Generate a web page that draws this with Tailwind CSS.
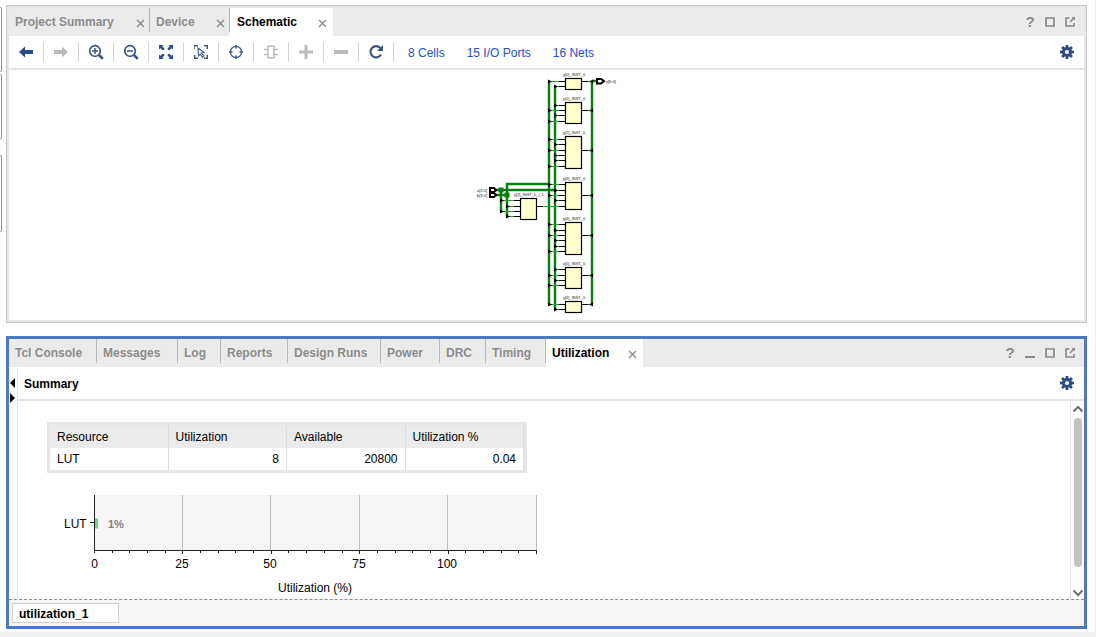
<!DOCTYPE html>
<html lang="en">
<head>
<meta charset="utf-8">
<title>Schematic and Utilization</title>
<script src="https://cdn.jsdelivr.net/npm/@tailwindcss/browser@4"></script>
</head>
<body class="flex min-h-screen flex-col bg-white font-['Liberation_Sans',Arial,sans-serif] text-xs text-black">

<svg class="hidden" aria-hidden="true">
  <symbol id="close" viewBox="0 0 9 9"><path d="M1 1l7 7M8 1L1 8" stroke="#8a8a8a" stroke-width="1.4" fill="none"/></symbol>
  <symbol id="box" viewBox="0 0 10 10"><path d="M1 1h8v8H1z" stroke="#8a8a8a" stroke-width="1.700" fill="none"/></symbol>
  <symbol id="popout" viewBox="0 0 10 10"><path d="M4.500 1H1v8h8V6M5 5l4-4" stroke="#8a8a8a" stroke-width="1.600" fill="none"/><path d="M6.500 0H10v3.500z" fill="#8a8a8a"/></symbol>
  <symbol id="gear" viewBox="-7 -7 14 14"><g fill="#2f4b80"><circle r="5.1"/><g id="teeth"><rect x="-1.4" y="-7" width="2.8" height="14"/><rect x="-7" y="-1.4" width="14" height="2.8"/></g><use href="#teeth" transform="rotate(45)"/></g><circle r="2.1" fill="#fff"/></symbol>
</svg>

<div class="flex grow">
  <aside class="flex w-[6px] shrink-0 flex-col items-start pt-[7px]" aria-hidden="true">
    <div class="h-[65px] w-[2px] rounded-r border border-l-0 border-[#8f8f8f]"></div>
    <div class="mt-[2px] h-[65px] w-[2px] rounded-r border border-l-0 border-[#8f8f8f]"></div>
    <div class="mt-4 h-[77px] w-[2px] rounded-r border border-l-0 border-[#8f8f8f]"></div>
  </aside>

  <main class="mr-[8px] flex min-w-0 grow flex-col gap-[13px] pt-[5px] pb-[3px]">
    <section class="border border-[#c6c6c6]" aria-label="Schematic">
     <div class="border-2 border-[#e8e8e8]">
      <div class="flex h-7 bg-[#ebebeb]">
        <div class="flex grow font-bold text-[#8c8c8c]">
          <div class="flex w-[140px] items-center justify-between pr-1 pl-[6px]"><button>Project Summary</button><button aria-label="Close Project Summary"><svg class="mt-[2px] size-[9px]"><use href="#close"/></svg></button></div>
          <div class="flex w-[80px] items-center justify-between pr-1"><span class="h-6 w-px self-start bg-[#b4b4b4]"></span><button class="mr-auto ml-[6px]">Device</button><button aria-label="Close Device"><svg class="mt-[2px] size-[9px]"><use href="#close"/></svg></button></div>
          <div class="flex w-[104px] items-center justify-between bg-white pr-[6px]"><span class="h-6 w-px self-start bg-[#b4b4b4]"></span><button class="mr-auto ml-[7px] text-black">Schematic</button><button aria-label="Close Schematic"><svg class="mt-[2px] size-[9px]"><use href="#close"/></svg></button></div>
        </div>
        <div class="flex pr-1 text-[#8a8a8a]">
          <button class="flex w-5 items-center justify-center text-[15px] font-bold" aria-label="Help">?</button>
          <button class="flex w-5 items-center justify-center" aria-label="Maximize"><svg class="size-[10px]"><use href="#box"/></svg></button>
          <button class="flex w-5 items-center justify-center" aria-label="Float"><svg class="size-[10px]"><use href="#popout"/></svg></button>
        </div>
      </div>

      <div class="flex h-[34px] items-center border-b-2 border-[#e5e5e5]">
        <button class="flex h-5 w-[35px] items-center justify-center border-r border-[#d4d4d4]" aria-label="Back"><svg class="h-[12px] w-[14px]" viewBox="0 0 14 12"><path d="M0 6l6-5.500v3.500h8v4H6v3.500z" fill="#2f4b87"/></svg></button>
        <button class="flex h-5 w-[35px] items-center justify-center border-r border-[#d4d4d4]" aria-label="Forward"><svg class="h-[12px] w-[14px]" viewBox="0 0 14 12"><path d="M14 6L8 .5V4H0v4h8v3.500z" fill="#b9b9b9"/></svg></button>
        <button class="flex h-5 w-[35px] items-center justify-center border-r border-[#d4d4d4]" aria-label="Zoom in"><svg class="size-4" viewBox="0 0 16 16" fill="none" stroke="#3a5283"><circle cx="7" cy="7" r="5.300" stroke-width="1.700"/><path d="M4 7h6M7 4v6" stroke-width="1.500"/><path d="M11 11l3.800 3.800" stroke-width="2.600"/></svg></button>
        <button class="flex h-5 w-[35px] items-center justify-center border-r border-[#d4d4d4]" aria-label="Zoom out"><svg class="size-4" viewBox="0 0 16 16" fill="none" stroke="#3a5283"><circle cx="7" cy="7" r="5.300" stroke-width="1.700"/><path d="M4 7h6" stroke-width="1.500"/><path d="M11 11l3.800 3.800" stroke-width="2.600"/></svg></button>
        <button class="flex h-5 w-[35px] items-center justify-center border-r border-[#d4d4d4]" aria-label="Zoom fit"><svg class="size-[14px]" viewBox="0 0 14 14"><path d="M0 0h4.500L3.300 1.300 5.800 3.900 4 5.600 1.400 3.200 0 4.500zM14 0v4.500l-1.400-1.300L10 5.600 8.200 3.900l2.500-2.600L9.500 0zM0 14V9.500l1.400 1.300L4 8.400l1.800 1.700-2.500 2.600L4.500 14zM14 14H9.500l1.200-1.300-2.500-2.600L10 8.400l2.600 2.400L14 9.500z" fill="#344e80"/></svg></button>
        <button class="flex h-5 w-[35px] items-center justify-center border-r border-[#d4d4d4]" aria-label="Select area"><svg class="size-[14px]" viewBox="0 0 14 14" fill="none" stroke="#3f5988"><path d="M0 4V.7h4M10 .7h3.300V4M13.300 10v3.300H10M4 13.300H.7V10" stroke-width="1.500"/><path d="M4 3l6 4.500-2.500.5 2.500 3-1.500 1.200L6.200 9.200 4.500 11z" stroke-width="1.100"/></svg></button>
        <button class="flex h-5 w-[35px] items-center justify-center border-r border-[#d4d4d4]" aria-label="Center"><svg class="size-[14px]" viewBox="0 0 14 14" fill="none" stroke="#3f5988"><circle cx="7" cy="7" r="5.600" stroke-width="1.300"/><path d="M7 0v3.500M7 10.500V14M0 7h3.500M10.500 7H14" stroke-width="1.500"/></svg></button>
        <button class="flex h-5 w-[35px] items-center justify-center border-r border-[#d4d4d4]" aria-label="Expand cell"><svg class="size-[14px]" viewBox="0 0 14 14" fill="none" stroke="#bcbcbc" stroke-width="1.500"><path d="M4 1.200h6v11.600H4zM0 4.500h4M0 9.500h4M10 4.500h4M10 9.500h4"/></svg></button>
        <button class="flex h-5 w-[35px] items-center justify-center border-r border-[#d4d4d4]" aria-label="Add"><svg class="size-[14px]" viewBox="0 0 14 14"><path d="M5.500 0h3v5.500H14v3H8.500V14h-3V8.500H0v-3h5.500z" fill="#bcbcbc"/></svg></button>
        <button class="flex h-5 w-[35px] items-center justify-center border-r border-[#d4d4d4]" aria-label="Remove"><svg class="size-[14px]" viewBox="0 0 14 14"><path d="M0 5h14v4H0z" fill="#bcbcbc"/></svg></button>
        <button class="flex h-5 w-[35px] items-center justify-center border-r border-[#d4d4d4]" aria-label="Refresh"><svg class="size-[14px]" viewBox="0 0 14 14"><path d="M11.300 3A5.600 5.600 0 1 0 12 9.500" fill="none" stroke="#3e5378" stroke-width="2.100"/><path d="M14 0v6H8z" fill="#3e5378"/></svg></button>
        <div class="ml-[14px] flex grow gap-[22px] pt-px text-[#2450c8]">
          <a href="#cells">8 Cells</a><a href="#ports">15 I/O Ports</a><a href="#nets">16 Nets</a>
        </div>
        <button class="mr-[10px]" aria-label="Schematic settings"><svg class="size-[14px]"><use href="#gear"/></svg></button>
      </div>

      <div class="flex justify-center">
        <svg id="schematic" class="h-[250px] w-[151px]" viewBox="471 70 151 250" role="img" aria-label="Netlist schematic">
          <g fill="none" stroke="#0b7d14" stroke-width="2.400">
            <path d="M549 81V304M555 86V309M592 81V304M592 81H597"/>
            <path d="M496 190H555M496 195H507M501 190V211M507 216V184H549"/>
          </g>
          <path d="M498.500 187.500h5v5h-5zM504.500 192.500h5v5h-5z" fill="#0b7d14"/>
          <g id="wires"></g>
          <g id="cells" fill="#ffffd0" stroke="#000" stroke-width="1.200"></g>
          <g fill="#fff" stroke="#000" stroke-width="2">
            <path d="M490 188h4l2 2-2 2h-4zM490 193h4l2 2-2 2h-4zM597 79h4l3 2-3 2.500h-4z"/>
          </g>
          <g id="names" fill="#222" font-size="4">
            <text x="477" y="192">a[3:0]</text><text x="477" y="197">b[3:0]</text><text x="606" y="83">y[6:0]</text>
            <text x="514" y="196">y[3]_INST_0_i_1</text>
          </g>
        </svg>
      </div>
     </div>
    </section>

    <section class="flex grow flex-col border-3 border-[#4d7abf]" aria-label="Utilization">
      <div class="flex h-7 bg-[#ebebeb]">
        <div class="flex grow font-bold text-[#8c8c8c]">
          <button class="mb-1 w-[88px] border-r border-[#b8b8b8] pt-1 pl-[6px] text-left">Tcl Console</button>
          <button class="mb-1 w-[81px] border-r border-[#b8b8b8] pt-1 pl-[6px] text-left">Messages</button>
          <button class="mb-1 w-[43px] border-r border-[#b8b8b8] pt-1 pl-[6px] text-left">Log</button>
          <button class="mb-1 w-[67px] border-r border-[#b8b8b8] pt-1 pl-[6px] text-left">Reports</button>
          <button class="mb-1 w-[93px] border-r border-[#b8b8b8] pt-1 pl-[6px] text-left">Design Runs</button>
          <button class="mb-1 w-[59px] border-r border-[#b8b8b8] pt-1 pl-[6px] text-left">Power</button>
          <button class="mb-1 w-[46px] border-r border-[#b8b8b8] pt-1 pl-[6px] text-left">DRC</button>
          <button class="mb-1 w-[60px] border-r border-[#b8b8b8] pt-1 pl-[6px] text-left">Timing</button>
          <div class="flex w-[97px] items-center justify-between bg-white pr-[6px] pl-[6px]"><button class="text-black">Utilization</button><button aria-label="Close Utilization"><svg class="mt-[2px] size-[9px]"><use href="#close"/></svg></button></div>
        </div>
        <div class="flex pr-1 text-[#8a8a8a]">
          <button class="flex w-5 items-center justify-center text-[15px] font-bold" aria-label="Help">?</button>
          <button class="flex w-5 items-center justify-center" aria-label="Minimize"><svg class="size-[10px]" viewBox="0 0 10 10"><path d="M0 8h10v2H0z" fill="#8a8a8a"/></svg></button>
          <button class="flex w-5 items-center justify-center" aria-label="Maximize"><svg class="size-[10px]"><use href="#box"/></svg></button>
          <button class="flex w-5 items-center justify-center" aria-label="Float"><svg class="size-[10px]"><use href="#popout"/></svg></button>
        </div>
      </div>

      <div class="flex grow">
        <div class="flex w-[9px] flex-col gap-[5px] border-r border-[#e2e2e2] pt-[11px] pl-px">
          <button aria-label="Collapse left"><svg class="h-[10px] w-[5px]" viewBox="0 0 5 10"><path d="M5 0v10L0 5z"/></svg></button>
          <button aria-label="Expand right"><svg class="h-[10px] w-[5px]" viewBox="0 0 5 10"><path d="M0 0v10l5-5z"/></svg></button>
        </div>
        <div class="flex min-w-0 grow flex-col">
          <div class="flex h-[34px] items-center justify-between border-b-2 border-[#e5e5e5] pr-[10px] pl-[6px]">
            <h2 class="pt-px font-bold">Summary</h2>
            <button aria-label="Utilization settings"><svg class="size-[14px]"><use href="#gear"/></svg></button>
          </div>
          <div class="flex grow">
            <div class="grow pt-[21px] pl-[29px]">
              <table class="w-[480px] table-fixed border-separate border-spacing-0 border-3 border-[#e6e6e6]">
                <thead>
                  <tr class="h-[23px] bg-[#ebebeb] text-left">
                    <th class="border-r border-[#dcdcdc] px-[7px] font-normal">Resource</th>
                    <th class="border-r border-[#dcdcdc] px-[7px] font-normal">Utilization</th>
                    <th class="border-r border-[#dcdcdc] px-[7px] font-normal">Available</th>
                    <th class="border-r border-[#dcdcdc] px-[7px] font-normal">Utilization %</th>
                  </tr>
                </thead>
                <tbody>
                  <tr class="h-[22px] text-right">
                    <td class="border-r border-[#dcdcdc] px-[7px] text-left">LUT</td>
                    <td class="border-r border-[#dcdcdc] px-[7px]">8</td>
                    <td class="border-r border-[#dcdcdc] px-[7px]">20800</td>
                    <td class="border-r border-[#dcdcdc] px-[7px]">0.04</td>
                  </tr>
                </tbody>
              </table>
              <svg class="mt-[17px] h-[108px] w-[500px]" viewBox="47 490 500 108" role="img" aria-label="Utilization chart">
                <path d="M94 495H537V550H94z" fill="#f5f5f5"/>
                <path d="M182.500 495V550M270.500 495V550M359.500 495V550M447.500 495V550M536.500 495V550" stroke="#bdbdbd"/>
                <path d="M95 518.500h3v10h-3z" fill="#6fd67a"/>
                <path id="axis" d="M94.500 495V553M90 522.500h4M94 550.500H537" fill="none" stroke="#222"/>
                <g id="ticks" stroke="#222"></g>
                <g text-anchor="middle">
                  <text x="94.500" y="568">0</text><text x="182" y="568">25</text><text x="270" y="568">50</text><text x="359" y="568">75</text><text x="447" y="568">100</text>
                  <text x="315" y="592">Utilization (%)</text>
                </g>
                <text x="64" y="528">LUT</text>
                <text x="108" y="528" font-size="11" font-weight="bold" fill="#808080">1%</text>
              </svg>
            </div>
            <div class="flex w-[14px] flex-col items-center border-l border-[#e0e0e0] pt-1" aria-hidden="true">
              <svg class="h-[8px] w-[12px]" viewBox="0 0 12 8"><path d="M1.500 6.500L6 2l4.500 4.500" fill="none" stroke="#707070" stroke-width="2"/></svg>
              <div class="mt-[5px] mb-[22px] w-2 grow rounded-full bg-[#c2c2c2]"></div>
              <svg class="mb-[2px] h-[8px] w-[12px]" viewBox="0 0 12 8"><path d="M1.500 1.500L6 6l4.500-4.500" fill="none" stroke="#707070" stroke-width="2"/></svg>
            </div>
          </div>
        </div>
      </div>

      <div class="border-t border-dashed border-[#8c8c8c] bg-[#f6f6f6] px-[3px] py-[3px]">
        <button class="block h-5 w-[107px] border border-[#cfcfcf] bg-white pt-px pl-[6px] text-left font-bold">utilization_1</button>
      </div>
    </section>
  </main>
  <div class="w-px bg-[#ececec]" aria-hidden="true"></div>
</div>
<footer class="h-[5px] bg-[#efefef]"></footer>

<script>
  // Each cell: top, height, output row, and inputs as [row, bus x]
  const cells = [
    { y: 78, h: 11, out: 81, ins: [[81, 549], [86, 555]] },
    { y: 102, h: 21, out: 110, ins: [[105, 555], [110, 549], [115, 555], [121, 549]] },
    { y: 136, h: 32, out: 150, ins: [[139, 549], [144, 555], [150, 549], [155, 555], [160, 555], [166, 549]] },
    { y: 182, h: 27, out: 195, ins: [[184, 549], [190, 555], [195, 549], [200, 555], [206, 537]] },
    { y: 222, h: 32, out: 235, ins: [[224, 549], [230, 555], [235, 549], [240, 555], [246, 555], [251, 549]] },
    { y: 267, h: 21, out: 275, ins: [[269, 555], [275, 549], [280, 555], [285, 549]] },
    { y: 301, h: 11, out: 304, ins: [[304, 549], [309, 555]] },
  ];
  const ns = 'http://www.w3.org/2000/svg';
  const add = (id, tag, attrs, text) => {
    const el = document.createElementNS(ns, tag);
    for (const k in attrs) el.setAttribute(k, attrs[k]);
    if (text) el.textContent = text;
    document.getElementById(id).appendChild(el);
  };
  const input = (bus, y, x) => {
    add('wires', 'path', { d: `M${bus} ${y + .5}H${x - 6}`, stroke: '#2c9a34' });
    add('wires', 'path', { d: `M${x - 6} ${y + .5}H${x}`, stroke: '#000' });
    if (bus !== 537) add('wires', 'path', { d: `M${bus - 1} ${y - 1.5}l4 2-4 2z`, fill: '#000' });
  };
  cells.forEach((c, i) => {
    c.ins.forEach(([y, bus]) => input(bus, y, 565));
    add('wires', 'path', { d: `M582 ${c.out + .5}H588`, stroke: '#000' });
    add('wires', 'path', { d: `M588 ${c.out + .5}H592`, stroke: '#2c9a34' });
    add('wires', 'path', { d: `M593 ${c.out - 1.5}l-4 2 4 2z`, fill: '#000' });
    add('cells', 'rect', { x: 565.5, y: c.y + .5, width: 16, height: c.h });
    add('names', 'text', { x: 563, y: c.y - 2 }, `y[${i}]_INST_0`);
  });
  [[200, 501], [206, 507], [211, 501], [216, 507]].forEach(([y, bus]) => input(bus, y, 520));
  add('wires', 'path', { d: 'M537 206.500H543', stroke: '#000' });
  add('cells', 'rect', { x: 520.5, y: 198.5, width: 16, height: 21 });

  for (let i = 1; i <= 25; i++) {
    const x = Math.round(94 + i * 17.68) + .5;
    if (x < 538) add('ticks', 'path', { d: `M${x} 551v${i % 5 ? 2 : 3}` });
  }
</script>
</body>
</html>
